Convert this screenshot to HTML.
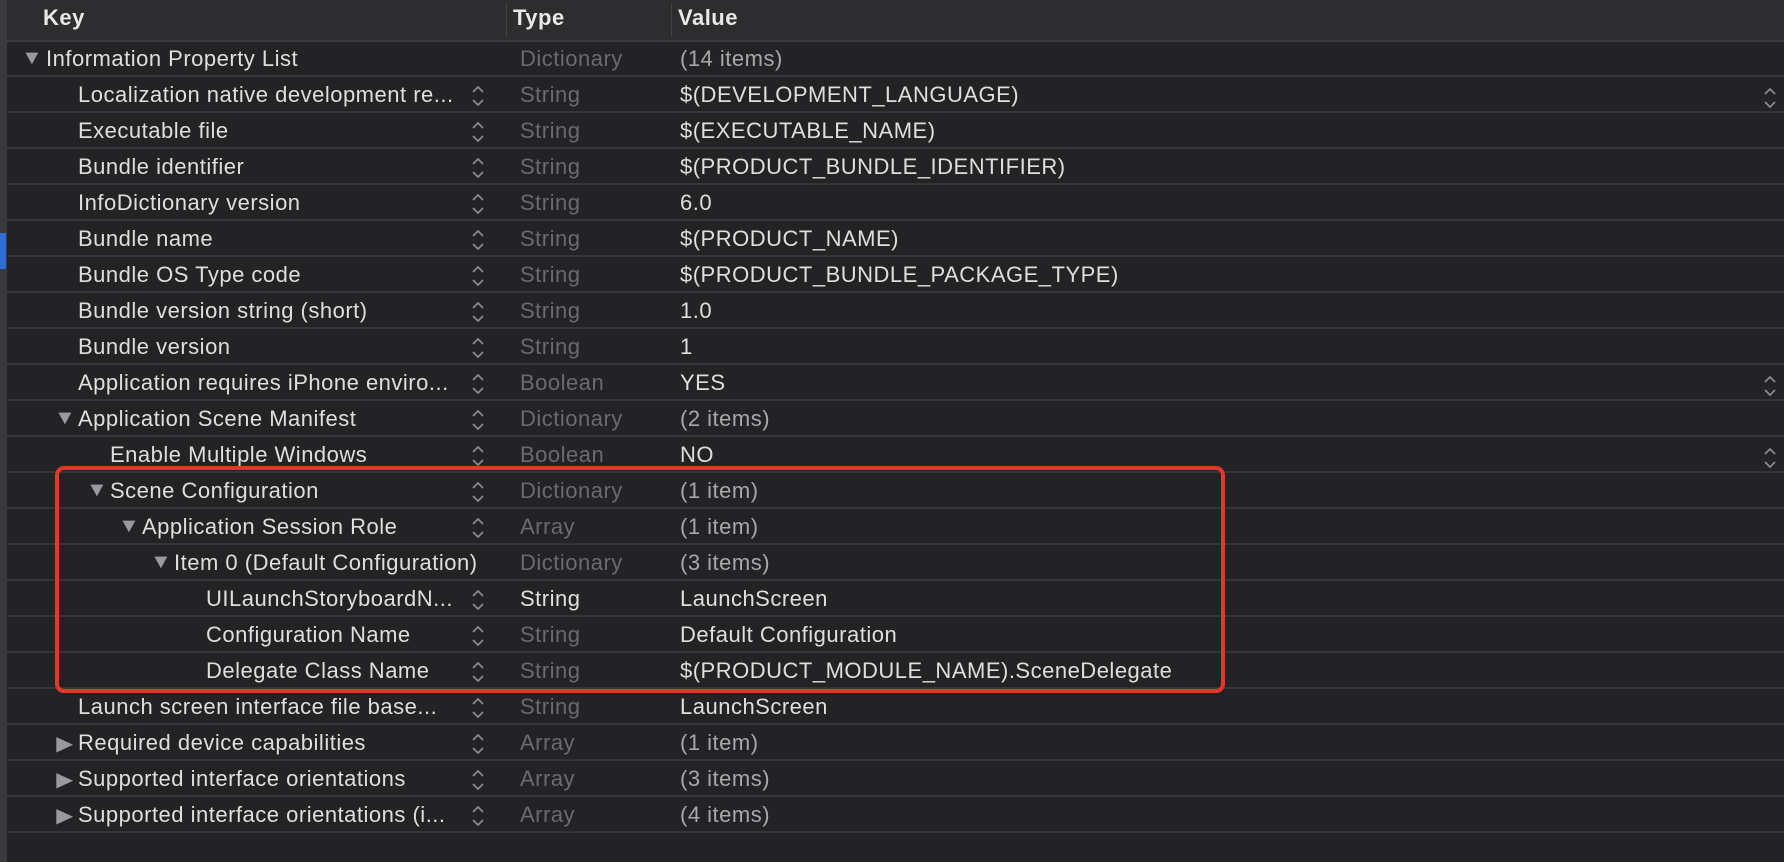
<!DOCTYPE html>
<html><head><meta charset="utf-8"><style>
body{margin:0;width:1784px;height:862px;background:#232326;overflow:hidden;font-family:"Liberation Sans",sans-serif;font-size:22px;letter-spacing:0.5px;color:#dfdfe0;position:relative}
.strip{position:absolute;left:0;top:0;width:7px;height:862px;background:#3a3a3c}
.blue{position:absolute;left:0;top:233px;width:6px;height:36px;background:#2f6fd1}
.hdr{position:absolute;left:7px;top:0;width:1777px;height:40px;background:#2d2d30;border-bottom:2px solid #3b3b3e}
.hdr span{position:absolute;top:5px;font-weight:bold;color:#e8e8e8}
.sep{position:absolute;top:4px;width:1px;height:32px;background:#444}
.row{position:absolute;left:7px;width:1777px;height:36px;border-bottom:2px solid #353538;box-sizing:border-box}
.row .k,.row .t,.row .v,.row .tri{position:absolute;top:5px;white-space:nowrap}
.t{left:513px;color:#6b6b6e}
.t.w{color:#e0e0e0}
.v{left:673px}
.tri{color:#9a9a9c;font-size:20px;top:6px !important;transform:scaleX(1.1)}
.st{position:absolute;top:7px;left:464px}
.st2{position:absolute;top:9px;left:1756px}
.red{position:absolute;left:55px;top:466px;width:1162px;height:219px;border:4px solid #e0392b;border-radius:9px}
</style></head><body>
<div class="strip"></div><div class="blue"></div>
<div class="hdr"><span style="left:36px">Key</span><div class="sep" style="left:499px"></div><span style="left:506px">Type</span><div class="sep" style="left:664px"></div><span style="left:671px">Value</span></div>
<svg width="0" height="0" style="position:absolute"><defs><symbol id="s" viewBox="0 0 14 24"><path d="M2 8 L7 3 L12 8 M2 16 L7 21 L12 16" fill="none" stroke="#8a8a8c" stroke-width="1.8"/></symbol></defs></svg>

<div class="row" style="top:41px"><span class="tri" style="left:15px">▼</span><span class="k" style="left:39px">Information Property List</span><span class="t">Dictionary</span><span class="v" style="color:#a8a8aa">(14 items)</span></div>
<div class="row" style="top:77px"><span class="k" style="left:71px">Localization native development re...</span><svg class="st" width="14" height="24"><use href="#s"/></svg><span class="t">String</span><span class="v">$(DEVELOPMENT_LANGUAGE)</span><svg class="st2" width="14" height="24"><use href="#s"/></svg></div>
<div class="row" style="top:113px"><span class="k" style="left:71px">Executable file</span><svg class="st" width="14" height="24"><use href="#s"/></svg><span class="t">String</span><span class="v">$(EXECUTABLE_NAME)</span></div>
<div class="row" style="top:149px"><span class="k" style="left:71px">Bundle identifier</span><svg class="st" width="14" height="24"><use href="#s"/></svg><span class="t">String</span><span class="v">$(PRODUCT_BUNDLE_IDENTIFIER)</span></div>
<div class="row" style="top:185px"><span class="k" style="left:71px">InfoDictionary version</span><svg class="st" width="14" height="24"><use href="#s"/></svg><span class="t">String</span><span class="v">6.0</span></div>
<div class="row" style="top:221px"><span class="k" style="left:71px">Bundle name</span><svg class="st" width="14" height="24"><use href="#s"/></svg><span class="t">String</span><span class="v">$(PRODUCT_NAME)</span></div>
<div class="row" style="top:257px"><span class="k" style="left:71px">Bundle OS Type code</span><svg class="st" width="14" height="24"><use href="#s"/></svg><span class="t">String</span><span class="v">$(PRODUCT_BUNDLE_PACKAGE_TYPE)</span></div>
<div class="row" style="top:293px"><span class="k" style="left:71px">Bundle version string (short)</span><svg class="st" width="14" height="24"><use href="#s"/></svg><span class="t">String</span><span class="v">1.0</span></div>
<div class="row" style="top:329px"><span class="k" style="left:71px">Bundle version</span><svg class="st" width="14" height="24"><use href="#s"/></svg><span class="t">String</span><span class="v">1</span></div>
<div class="row" style="top:365px"><span class="k" style="left:71px">Application requires iPhone enviro...</span><svg class="st" width="14" height="24"><use href="#s"/></svg><span class="t">Boolean</span><span class="v">YES</span><svg class="st2" width="14" height="24"><use href="#s"/></svg></div>
<div class="row" style="top:401px"><span class="tri" style="left:48px">▼</span><span class="k" style="left:71px">Application Scene Manifest</span><svg class="st" width="14" height="24"><use href="#s"/></svg><span class="t">Dictionary</span><span class="v" style="color:#a8a8aa">(2 items)</span></div>
<div class="row" style="top:437px"><span class="k" style="left:103px">Enable Multiple Windows</span><svg class="st" width="14" height="24"><use href="#s"/></svg><span class="t">Boolean</span><span class="v">NO</span><svg class="st2" width="14" height="24"><use href="#s"/></svg></div>
<div class="row" style="top:473px"><span class="tri" style="left:80px">▼</span><span class="k" style="left:103px">Scene Configuration</span><svg class="st" width="14" height="24"><use href="#s"/></svg><span class="t">Dictionary</span><span class="v" style="color:#a8a8aa">(1 item)</span></div>
<div class="row" style="top:509px"><span class="tri" style="left:112px">▼</span><span class="k" style="left:135px">Application Session Role</span><svg class="st" width="14" height="24"><use href="#s"/></svg><span class="t">Array</span><span class="v" style="color:#a8a8aa">(1 item)</span></div>
<div class="row" style="top:545px"><span class="tri" style="left:144px">▼</span><span class="k" style="left:167px">Item 0 (Default Configuration)</span><span class="t">Dictionary</span><span class="v" style="color:#a8a8aa">(3 items)</span></div>
<div class="row" style="top:581px"><span class="k" style="left:199px">UILaunchStoryboardN...</span><svg class="st" width="14" height="24"><use href="#s"/></svg><span class="t w">String</span><span class="v">LaunchScreen</span></div>
<div class="row" style="top:617px"><span class="k" style="left:199px">Configuration Name</span><svg class="st" width="14" height="24"><use href="#s"/></svg><span class="t">String</span><span class="v">Default Configuration</span></div>
<div class="row" style="top:653px"><span class="k" style="left:199px">Delegate Class Name</span><svg class="st" width="14" height="24"><use href="#s"/></svg><span class="t">String</span><span class="v">$(PRODUCT_MODULE_NAME).SceneDelegate</span></div>
<div class="row" style="top:689px"><span class="k" style="left:71px">Launch screen interface file base...</span><svg class="st" width="14" height="24"><use href="#s"/></svg><span class="t">String</span><span class="v">LaunchScreen</span></div>
<div class="row" style="top:725px"><span class="tri" style="left:50px">▶</span><span class="k" style="left:71px">Required device capabilities</span><svg class="st" width="14" height="24"><use href="#s"/></svg><span class="t">Array</span><span class="v" style="color:#a8a8aa">(1 item)</span></div>
<div class="row" style="top:761px"><span class="tri" style="left:50px">▶</span><span class="k" style="left:71px">Supported interface orientations</span><svg class="st" width="14" height="24"><use href="#s"/></svg><span class="t">Array</span><span class="v" style="color:#a8a8aa">(3 items)</span></div>
<div class="row" style="top:797px"><span class="tri" style="left:50px">▶</span><span class="k" style="left:71px">Supported interface orientations (i...</span><svg class="st" width="14" height="24"><use href="#s"/></svg><span class="t">Array</span><span class="v" style="color:#a8a8aa">(4 items)</span></div>
<div class="red"></div>
</body></html>
